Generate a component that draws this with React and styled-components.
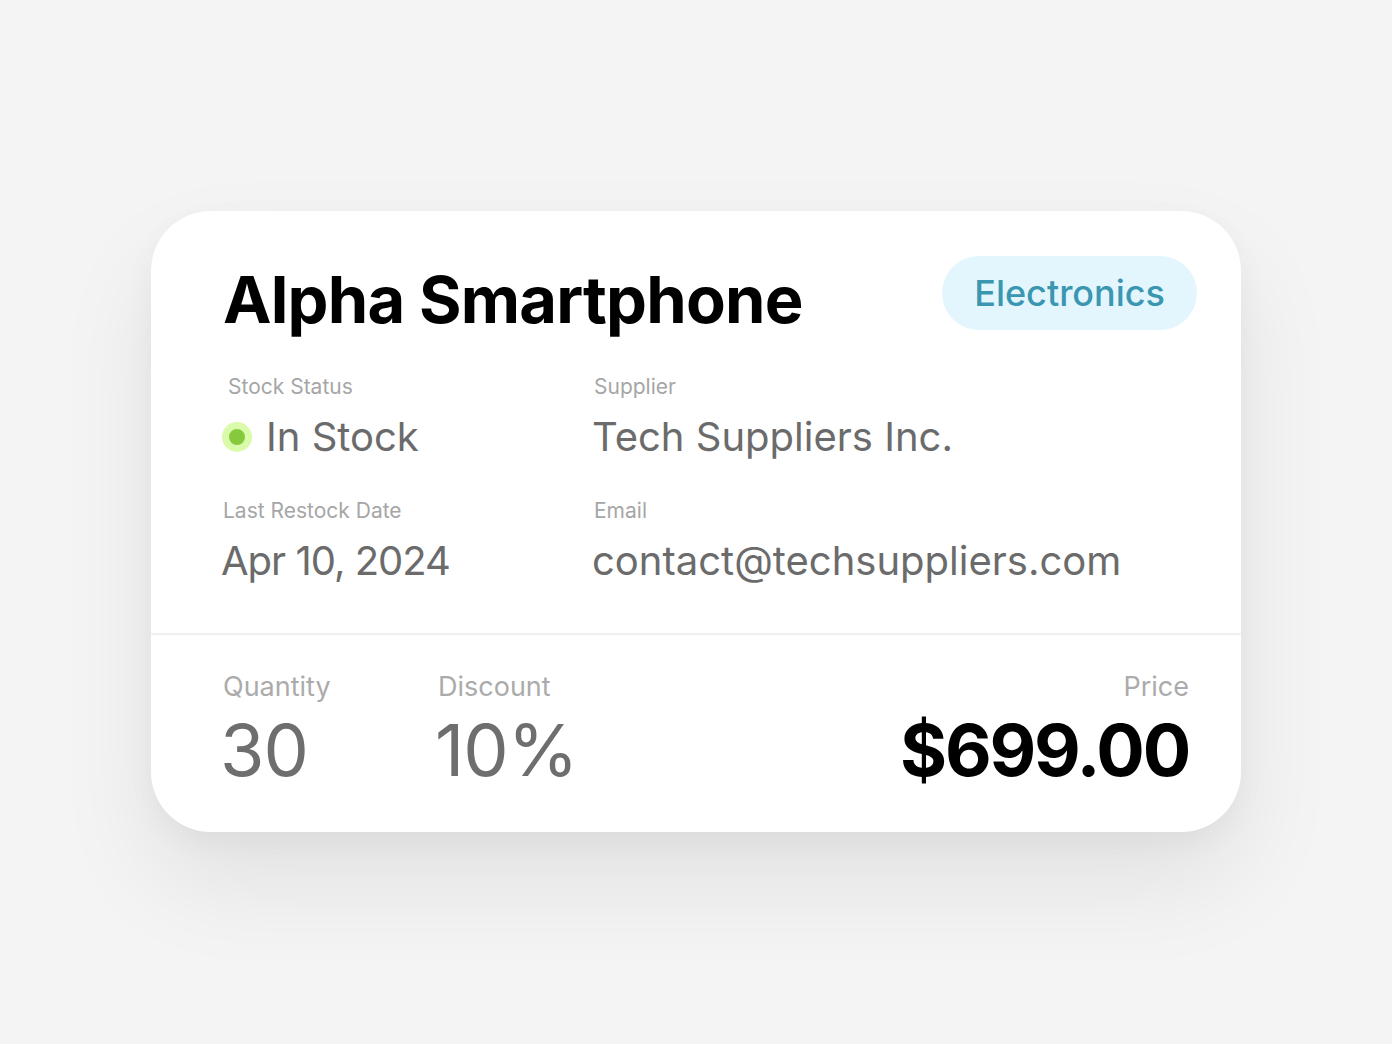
import React from 'react';
import styled, { createGlobalStyle } from 'styled-components';

const GlobalStyle = createGlobalStyle`
    html, body {
        margin: 0;
        padding: 0;
        background: #f4f4f4;
        font-family: Inter, "Noto Sans", sans-serif;
    }
`

const Page = styled.div`
    width: 1392px;
    height: 1044px;
    display: flex;
    justify-content: center;
    padding-top: 211px;
    box-sizing: border-box;
`

const Card = styled.div`
    width: 1090px;
    height: 621px;
    box-sizing: border-box;
    background: #fff;
    border-radius: 60px;
    box-shadow: 0 50px 100px rgba(0, 0, 0, 0.08), 0 10px 30px rgba(0, 0, 0, 0.04);
    display: flex;
    flex-direction: column;
    overflow: hidden;
`

const Top = styled.div`
    padding: 45px 44px 0 72px;
    height: 424px;
    box-sizing: border-box;
    border-bottom: 2px solid #f0f0f0;
`

const Header = styled.div`
    display: flex;
    align-items: flex-start;
    justify-content: space-between;
`

const Title = styled.h1`
    margin: 4px 0 0;
    font-size: 65px;
    font-weight: 700;
    letter-spacing: -0.8px;
    color: #000;
`

const Badge = styled.span`
    background: #e4f6fd;
    color: #3b97b1;
    font-size: 36px;
    font-weight: 500;
    padding: 0 32px;
    height: 74px;
    display: flex;
    align-items: center;
    border-radius: 37px;
`

const InfoGrid = styled.div`
    display: grid;
    grid-template-columns: 371px 1fr;
    row-gap: 37px;
    margin-top: 35px;
`

const Field = styled.div`
    display: flex;
    flex-direction: column;
    gap: 13px;
`

const Label = styled.span`
    font-size: 21px;
    color: #a6a6a6;
    padding-left: ${p => p.indent ? '5px' : '0'};
`

const Value = styled.span`
    display: flex;
    align-items: center;
    gap: 14px;
    font-size: 40px;
    color: #6b6b6b;
    margin-left: -2px;
    letter-spacing: ${p => p.numeric ? '-1px' : '0'};
`

const Dot = styled.span`
    width: 16px;
    height: 16px;
    border-radius: 50%;
    background: #86c93d;
    border: 7px solid #d9fbaa;
    margin-left: 1px;
`

const Bottom = styled.div`
    flex: 1;
    display: flex;
    align-items: flex-start;
    padding: 35px 52px 0 72px;
`

const Stat = styled.div`
    display: flex;
    flex-direction: column;
    gap: 3px;
    width: ${p => p.width || 'auto'};
    margin-left: ${p => p.push ? 'auto' : '0'};
    align-items: ${p => p.push ? 'flex-end' : 'flex-start'};
`

const StatLabel = styled.span`
    font-size: 27px;
    color: #ababab;
`

const StatValue = styled.span`
    font-size: 72px;
    font-weight: ${p => p.strong ? 700 : 400};
    color: ${p => p.strong ? '#000' : '#6e6e6e'};
    letter-spacing: ${p => p.strong ? '-2.2px' : '-1px'};
    margin-left: -3px;
`

export default function App() {
    return (
        <>
            <GlobalStyle />
            <Page>
                <Card>
                    <Top>
                        <Header>
                            <Title>Alpha Smartphone</Title>
                            <Badge>Electronics</Badge>
                        </Header>
                        <InfoGrid>
                            <Field>
                                <Label indent>Stock Status</Label>
                                <Value><Dot />In Stock</Value>
                            </Field>
                            <Field>
                                <Label>Supplier</Label>
                                <Value>Tech Suppliers Inc.</Value>
                            </Field>
                            <Field>
                                <Label>Last Restock Date</Label>
                                <Value numeric>Apr 10, 2024</Value>
                            </Field>
                            <Field>
                                <Label>Email</Label>
                                <Value>contact@techsuppliers.com</Value>
                            </Field>
                        </InfoGrid>
                    </Top>
                    <Bottom>
                        <Stat width="215px">
                            <StatLabel>Quantity</StatLabel>
                            <StatValue>30</StatValue>
                        </Stat>
                        <Stat>
                            <StatLabel>Discount</StatLabel>
                            <StatValue>10%</StatValue>
                        </Stat>
                        <Stat push>
                            <StatLabel>Price</StatLabel>
                            <StatValue strong>$699.00</StatValue>
                        </Stat>
                    </Bottom>
                </Card>
            </Page>
        </>
    );
}
